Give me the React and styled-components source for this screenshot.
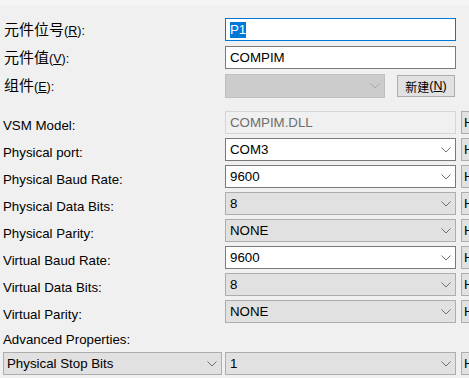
import React from 'react';
import styled, { createGlobalStyle } from 'styled-components'

const props = [
    { label: 'VSM Model:', value: 'COMPIM.DLL', kind: 'readonly' },
    { label: 'Physical port:', value: 'COM3', kind: 'white' },
    { label: 'Physical Baud Rate:', value: '9600', kind: 'white' },
    { label: 'Physical Data Bits:', value: '8', kind: 'gray' },
    { label: 'Physical Parity:', value: 'NONE', kind: 'gray' },
    { label: 'Virtual Baud Rate:', value: '9600', kind: 'white' },
    { label: 'Virtual Data Bits:', value: '8', kind: 'gray' },
    { label: 'Virtual Parity:', value: 'NONE', kind: 'gray' },
]

function Chevron({ color = '#707070' }) {
    return (
        <svg width="10" height="6" viewBox="0 0 10 6">
            <polyline points="0.5,0.5 5,5 9.5,0.5" fill="none" stroke={color} strokeWidth="1" />
        </svg>
    )
}

function App() {
    return (
        <Page>
            <GlobalStyle />
            <TopEdge />
            <TopSection>
                <TopRow>
                    <CnLabel>元件位号<Key>(<u>R</u>):</Key></CnLabel>
                    <TextBox $variant="focus"><Selected>P1</Selected></TextBox>
                </TopRow>
                <TopRow>
                    <CnLabel>元件值<Key>(<u>V</u>):</Key></CnLabel>
                    <TextBox>COMPIM</TextBox>
                </TopRow>
                <ComponentRow>
                    <CnLabel>组件<Key>(<u>E</u>):</Key></CnLabel>
                    <Select $variant="disabled">
                        <span></span>
                        <Chevron color="#a8a8a8" />
                    </Select>
                    <span />
                    <NewButton>新建<Key>(<u>N</u>)</Key></NewButton>
                </ComponentRow>
            </TopSection>

            <PropList>
                {props.map(p => (
                    <PropRow key={p.label}>
                        <Label>{p.label}</Label>
                        {p.kind === 'readonly'
                            ? <TextBox $variant="readonly">{p.value}</TextBox>
                            : (
                                <Select $variant={p.kind}>
                                    <span>{p.value}</span>
                                    <Chevron />
                                </Select>
                            )}
                        <span />
                        <HideBox>Hide All</HideBox>
                    </PropRow>
                ))}
            </PropList>

            <AdvancedLabel>Advanced Properties:</AdvancedLabel>
            <BottomRow>
                <span />
                <Select $variant="gray" $pad={3}>
                    <span>Physical Stop Bits</span>
                    <Chevron />
                </Select>
                <span />
                <Select $variant="gray">
                    <span>1</span>
                    <Chevron />
                </Select>
                <span />
                <HideBox>Hide All</HideBox>
            </BottomRow>
        </Page>
    );
}

export default App;

const GlobalStyle = createGlobalStyle`
    html, body {
        margin: 0;
        padding: 0;
        background: #f0f0f0;
    }
    body {
        font-family: "Liberation Sans", Arial, "Noto Sans CJK SC", sans-serif;
        font-size: 13.3px;
        color: #000;
    }
`

const Page = styled.div`
    width: 469px;
    height: 378px;
    overflow: hidden;
    background: #f0f0f0;
`
const TopEdge = styled.div`
    height: 5px;
    background: #f5f5f5;
`
const TopSection = styled.div`
    margin-top: 13px;
`
const TopRow = styled.div`
    display: grid;
    grid-template-columns: 225px 231px;
    align-items: center;
    height: 23px;
    margin-bottom: 5px;
`
const ComponentRow = styled.div`
    display: grid;
    grid-template-columns: 225px 160px 12px 58px;
    align-items: center;
    height: 24px;
`
const CnLabel = styled.div`
    padding-left: 4px;
    font-family: "Noto Sans CJK SC", sans-serif;
    font-size: 15px;
    line-height: 18px;
    white-space: nowrap;
`
const Key = styled.span`
    font-family: "Liberation Sans", Arial, sans-serif;
    font-size: 12.5px;
`
const TextBox = styled.div`
    box-sizing: border-box;
    height: 23px;
    display: flex;
    align-items: center;
    padding-left: 4px;
    border: 1px solid ${p => p.$variant === 'focus' ? '#0078d7' : p.$variant === 'readonly' ? '#d5d5d5' : '#7a7a7a'};
    background: ${p => p.$variant === 'readonly' ? '#f0f0f0' : '#fff'};
    color: ${p => p.$variant === 'readonly' ? '#6d6d6d' : '#000'};
    white-space: nowrap;
`
const Selected = styled.span`
    background: #0078d7;
    color: #fff;
    line-height: 16px;
`
const selectColors = {
    white: { bg: '#fff', border: '#7a7a7a' },
    gray: { bg: '#e1e1e1', border: '#adadad' },
    disabled: { bg: '#cccccc', border: '#bfbfbf' },
}
const Select = styled.div`
    box-sizing: border-box;
    height: ${p => p.$variant === 'disabled' ? 24 : 23}px;
    display: flex;
    align-items: center;
    justify-content: space-between;
    padding: 0 4px 0 ${p => p.$pad ?? 4}px;
    border: 1px solid ${p => selectColors[p.$variant].border};
    background: ${p => selectColors[p.$variant].bg};
    white-space: nowrap;
`
const NewButton = styled.div`
    box-sizing: border-box;
    height: 22px;
    display: flex;
    align-items: center;
    justify-content: center;
    border: 1px solid #adadad;
    background: #e1e1e1;
    font-family: "Noto Sans CJK SC", sans-serif;
    font-size: 12px;
    white-space: nowrap;
`
const PropList = styled.div`
    margin-top: 13px;
`
const PropRow = styled.div`
    display: grid;
    grid-template-columns: 225px 231px 5px 40px;
    height: 23px;
    margin-bottom: 4px;
`
const Label = styled.div`
    align-self: end;
    padding-left: 3px;
    line-height: 16px;
    white-space: nowrap;
`
const HideBox = styled.div`
    box-sizing: border-box;
    height: 23px;
    display: flex;
    align-items: center;
    padding-left: 2px;
    border: 1px solid #adadad;
    background: #e1e1e1;
    white-space: nowrap;
    overflow: hidden;
`
const AdvancedLabel = styled.div`
    margin-top: 9px;
    padding-left: 3px;
    line-height: 16px;
`
const BottomRow = styled.div`
    display: grid;
    grid-template-columns: 3px 219px 3px 231px 5px 40px;
    height: 23px;
    margin-top: 4px;
`
